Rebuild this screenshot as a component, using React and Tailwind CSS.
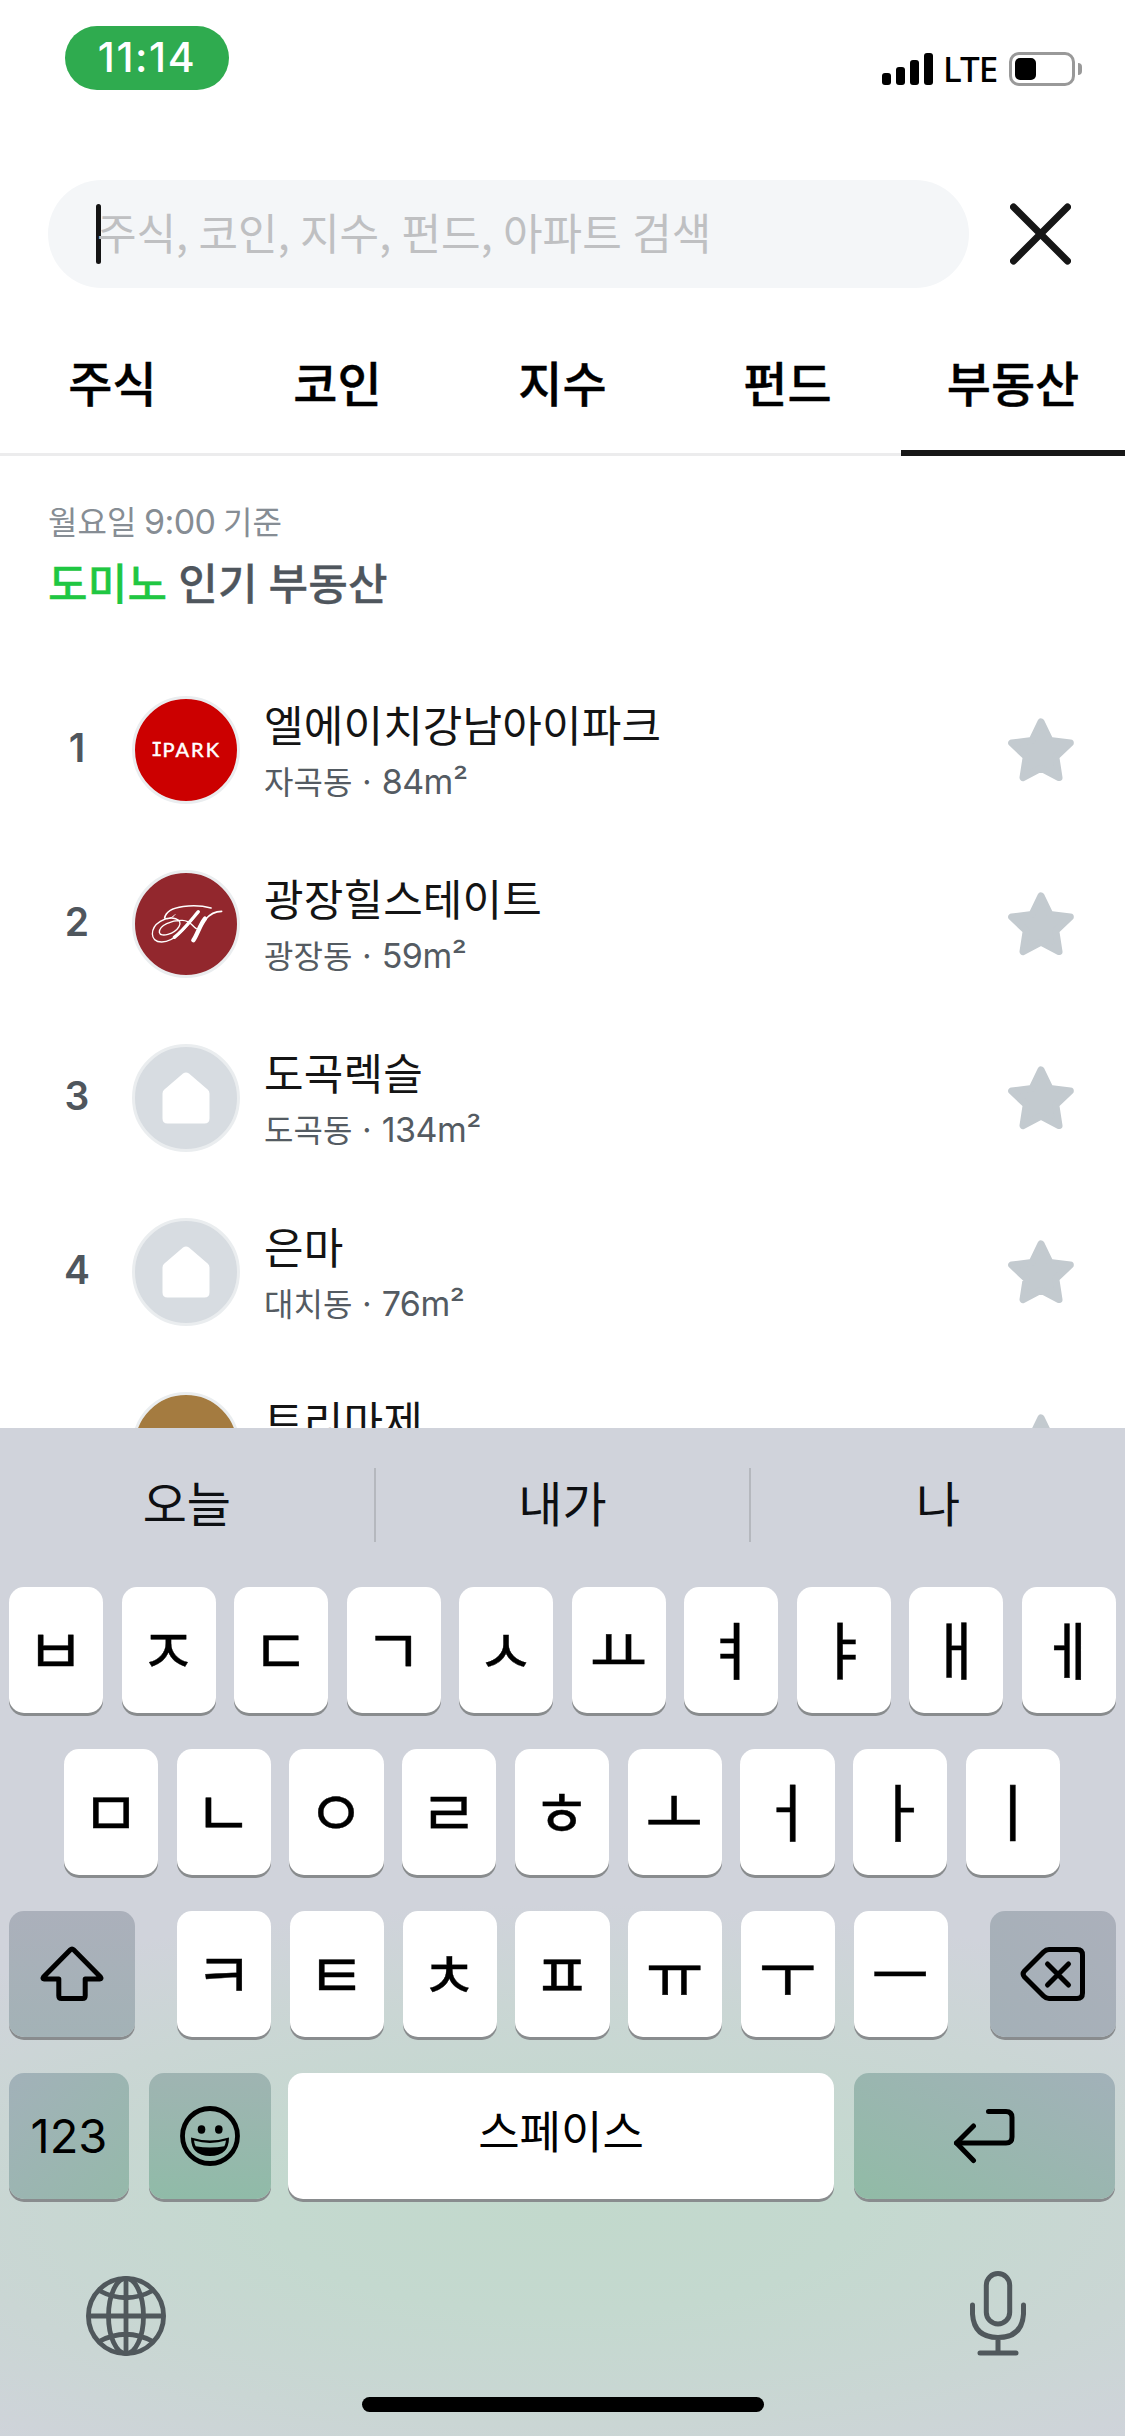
import clsx from "clsx";

const tabs = ["주식", "코인", "지수", "펀드", "부동산"];

const apartments = [
  { rank: 1, name: "엘에이치강남아이파크", area: "자곡동", size: "84m²", logo: "ipark" },
  { rank: 2, name: "광장힐스테이트", area: "광장동", size: "59m²", logo: "hillstate" },
  { rank: 3, name: "도곡렉슬", area: "도곡동", size: "134m²", logo: "house" },
  { rank: 4, name: "은마", area: "대치동", size: "76m²", logo: "house" },
  { name: "트리마제", logo: "trimage" },
];

const suggestions = ["오늘", "내가", "나"];
const firstRow = ["ㅂ", "ㅈ", "ㄷ", "ㄱ", "ㅅ", "ㅛ", "ㅕ", "ㅑ", "ㅐ", "ㅔ"];
const secondRow = ["ㅁ", "ㄴ", "ㅇ", "ㄹ", "ㅎ", "ㅗ", "ㅓ", "ㅏ", "ㅣ"];
const thirdRow = ["ㅋ", "ㅌ", "ㅊ", "ㅍ", "ㅠ", "ㅜ", "ㅡ"];

function StatusBar() {
  return (
    <header className="flex h-[180px] items-start justify-between pt-[26px] pr-[43px] pl-[65px]">
      <div className="flex h-16 w-[164px] items-center justify-center rounded-full bg-[#2fab4f] font-['Inter'] text-[41px] font-medium tracking-[1.6px] text-white">
        11:14
      </div>
      <div className="flex items-end pt-[26px]">
        <div className="mb-px flex items-end gap-[5px]">
          <span className="h-3 w-[9px] rounded-[3px] bg-black" />
          <span className="h-[18px] w-[9px] rounded-[3px] bg-black" />
          <span className="h-[25px] w-[9px] rounded-[3px] bg-black" />
          <span className="h-8 w-[9px] rounded-[3px] bg-black" />
        </div>
        <span className="ml-[10px] w-[66px] font-['Noto_Sans'] text-[35px] leading-[34px] font-medium tracking-[-1px] text-black">
          LTE
        </span>
        <div className="flex h-[34px] w-[66px] items-center rounded-[10px] border-3 border-[#999] pl-[3px]">
          <span className="h-[22px] w-[21px] rounded-[5px] bg-black" />
        </div>
        <span className="mb-[11px] ml-[3px] h-3 w-1 rounded-r-full bg-[#999]" />
      </div>
    </header>
  );
}

function SearchBar() {
  return (
    <div className="flex h-[108px] items-center pl-12">
      <div className="flex h-full w-[921px] shrink-0 items-center rounded-full bg-[#f4f6f8] pl-12">
        <span className="h-[60px] w-[5px] rounded-full bg-[#141414]" />
        <span className="-ml-[4px] pb-[6px] text-[43px] leading-[60px] whitespace-nowrap text-[#bfc0c2] [word-spacing:0.8px]">
          주식, 코인, 지수, 펀드, 아파트 검색
        </span>
      </div>
      <button type="button" className="ml-[41px]">
        <svg width="61" height="62" viewBox="0 0 61 62" fill="none" stroke="#161616" strokeWidth="7" strokeLinecap="round">
          <path d="M3.5 4 57.5 58M57.5 4 3.5 58" />
        </svg>
      </button>
    </div>
  );
}

function Tabs() {
  return (
    <nav className="grid h-[168px] grid-cols-5 shadow-[inset_0_-3px_0_#ececed]">
      {tabs.map((tab, i) => (
        <button
          key={tab}
          type="button"
          className={clsx(
            "pt-[18px] text-[48px] font-medium text-black [-webkit-text-stroke:0.4px_#000]",
            i === 4 && "ml-px shadow-[inset_0_-6px_0_#171717]"
          )}
        >
          {tab}
        </button>
      ))}
    </nav>
  );
}

function Logo({ type }) {
  return (
    <div
      className={clsx(
        "flex size-[108px] shrink-0 items-center justify-center rounded-full border-3 border-[#eaedef]",
        type === "ipark" && "bg-[#cc0000]",
        type === "hillstate" && "bg-[#92272d]",
        type === "house" && "bg-[#d7dce1]",
        type === "trimage" && "bg-[#a47b40]"
      )}
    >
      {type === "ipark" && (
        <span className="flex items-center pb-0.5 text-[20px] leading-5 tracking-[2px] text-white [-webkit-text-stroke:0.5px_#fff]">
          <span className="font-['DejaVu_Sans_Mono'] text-[19px] tracking-[0px]">I</span>
          <span className="font-['Lato']">PARK</span>
        </span>
      )}
      {type === "hillstate" && (
        <svg width="102" height="102" viewBox="46 39 306 306" fill="none" stroke="#fff" strokeLinecap="round">
          <path d="M274 144C230 132 142 134 135 174" strokeWidth="5" />
          <path d="M135 174C142 181 160 172 166 164" strokeWidth="3" />
          <path d="M236 155C206 196 166 246 126 246C88 246 91 203 122 184C156 164 192 178 178 200C165 222 122 234 119 217C118 196 156 180 188 181C214 182 214 196 230 206" strokeWidth="4" />
          <path d="M236 155C212 183 190 212 164 232" strokeWidth="10" />
          <path d="M306 154C264 154 246 190 221 242" strokeWidth="5" />
          <path d="M256 176C240 196 234 222 221 241" strokeWidth="13" />
        </svg>
      )}
      {type === "house" && (
        <svg width="48" height="52" viewBox="0 0 48 52" fill="#fff">
          <path d="M21 1.6Q24-.8 27 1.6L45.6 17.4Q47.5 19 47.5 21.5V46.5Q47.5 51.5 42.5 51.5H5.5Q.5 51.5 .5 46.5V21.5Q.5 19 2.4 17.4Z" />
        </svg>
      )}
    </div>
  );
}

function Star() {
  return (
    <svg width="66" height="64" viewBox="0 0 66 64" fill="#c3cacf" stroke="#c3cacf" strokeWidth="7" strokeLinejoin="round">
      <path d="M33 3.8 42 22.4 62.3 25 47.8 38.8 51 59.6 33 50.2 15 59.6 18.2 38.8 3.7 25 24 22.4Z" />
    </svg>
  );
}

function ApartmentRow({ apartment }) {
  return (
    <li className="flex h-[174px] shrink-0 items-center pr-[51px] pl-12">
      <span className="w-[58px] pb-[3px] text-center font-['Inter'] text-[39px] font-semibold text-[#4f565d]">
        {apartment.rank}
      </span>
      <div className="ml-[26px]">
        <Logo type={apartment.logo} />
      </div>
      <div className="ml-6 h-[110px] flex-1">
        <p className="-mt-[3px] mb-[2px] text-[43px] leading-[62px] tracking-[0.15px] text-[#141414]">{apartment.name}</p>
        {apartment.area && (
          <p className="text-[32px] leading-[48px] text-[#545b62] [word-spacing:-1.5px]">
            {apartment.area} · <span className="font-['Inter'] text-[34px] tracking-[-0.5px]">{apartment.size}</span>
          </p>
        )}
      </div>
      <Star />
    </li>
  );
}

function Key({ dark, className, children }) {
  return (
    <button
      type="button"
      className={clsx(
        "flex h-[126px] items-center justify-center rounded-[15px] text-black shadow-[0_3px_0_#898c8e]",
        !dark && "bg-white",
        className
      )}
    >
      {children}
    </button>
  );
}

function JamoKey({ label }) {
  return (
    <Key className="pr-px pb-[7px]">
      <span className="text-[63px] leading-none [-webkit-text-stroke:0.4px_#000]">{label}</span>
    </Key>
  );
}

function ShiftIcon() {
  return (
    <svg width="64" height="56" viewBox="0 0 64 56" fill="none" stroke="#000" strokeWidth="5" strokeLinejoin="round">
      <path d="M30.4 3.7Q32 2.1 33.6 3.7L60.5 31Q61.8 33 60 33H45.2V49.8Q45.2 52.5 42.5 52.5H21.5Q18.8 52.5 18.8 49.8V33H4Q2.2 33 3.5 31Z" />
    </svg>
  );
}

function BackspaceIcon() {
  return (
    <svg width="66" height="56" viewBox="0 0 66 56" fill="none" stroke="#000" strokeWidth="5" strokeLinecap="round" strokeLinejoin="round">
      <path d="M29 3.5H57Q62.5 3.5 62.5 9V47Q62.5 52.5 57 52.5H29Q26 52.5 23.5 50L4.5 31Q1.8 28 4.5 25L23.5 6Q26 3.5 29 3.5Z" />
      <path d="M27.5 18 48.5 39M48.5 18 27.5 39" />
    </svg>
  );
}

function EmojiIcon() {
  return (
    <svg width="60" height="60" viewBox="0 0 60 60" fill="none">
      <circle cx="30" cy="30" r="27.5" stroke="#000" strokeWidth="4.8" />
      <ellipse cx="21.5" cy="23.5" rx="3.8" ry="4.2" fill="#000" />
      <ellipse cx="38.8" cy="23.5" rx="3.8" ry="4.2" fill="#000" />
      <path d="M11 31.5Q30 37.5 49 31.5Q49 50 30 50Q11 50 11 31.5Z" fill="#000" />
      <path d="M14 34.6Q30 39.5 46 34.6Q45.6 38 44.3 40.2Q30 42.8 15.7 40.2Q14.4 38 14 34.6Z" fill="#94b9ac" />
    </svg>
  );
}

function ReturnIcon() {
  return (
    <svg width="62" height="56" viewBox="0 0 62 56" fill="none" stroke="#000" strokeWidth="5" strokeLinecap="round" strokeLinejoin="round">
      <path d="M35.5 3.5H53Q59 3.5 59 9.5V29Q59 35 53 35H3.5" />
      <path d="M20.5 18 3.5 35 20.5 52.5" />
    </svg>
  );
}

function GlobeIcon() {
  return (
    <svg width="80" height="80" viewBox="0 0 80 80" fill="none" stroke="#50585c" strokeWidth="4.8">
      <circle cx="40" cy="40" r="37.6" />
      <ellipse cx="40" cy="40" rx="17.5" ry="37.6" />
      <path d="M40 2V78M2 40H78M13 14.5Q40 29 67 14.5M13 65.5Q40 51 67 65.5" />
    </svg>
  );
}

function MicIcon() {
  return (
    <svg width="56" height="85" viewBox="0 0 56 85" fill="none" stroke="#50585c" strokeWidth="5" strokeLinecap="round">
      <rect x="16.3" y="2.5" width="23.4" height="50.5" rx="11.7" />
      <path d="M2.5 34V43Q4 66.5 28 66.5T53.5 43V34M28 67V82M10 82H46" />
    </svg>
  );
}

function Keyboard() {
  return (
    <section className="flex h-[1008px] flex-col bg-[#d0d3db] bg-[radial-gradient(ellipse_900px_310px_at_50%_78%,#c2d9cc_0%,#c4d9cf_32%,#cad6d4_68%,#d0d3db_100%)]">
      <div className="flex h-[159px] items-center pb-[6px]">
        {suggestions.map((word, i) => (
          <div
            key={word}
            className={clsx(
              "flex h-[74px] flex-1 items-center justify-center pb-[7px] text-[48px] text-[#0d0f12]",
              i < 2 && "border-r-2 border-[#b5b8be]"
            )}
          >
            {word}
          </div>
        ))}
      </div>

      <div className="flex flex-col gap-9 px-[9px]">
        <div className="grid grid-cols-10 gap-[18.5px]">
          {firstRow.map((label) => (
            <JamoKey key={label} label={label} />
          ))}
        </div>
        <div className="grid grid-cols-9 gap-[18.5px] pr-14 pl-[55px]">
          {secondRow.map((label) => (
            <JamoKey key={label} label={label} />
          ))}
        </div>
        <div className="flex justify-between">
          <Key dark className="w-[126px] bg-linear-to-b from-[#abb0bb] to-[#a3b2b6]">
            <ShiftIcon />
          </Key>
          <div className="grid w-[771px] grid-cols-7 gap-[18.5px]">
            {thirdRow.map((label) => (
              <JamoKey key={label} label={label} />
            ))}
          </div>
          <Key dark className="w-[126px] bg-linear-to-bl from-[#abb0bb] to-[#a4b0b7]">
            <BackspaceIcon />
          </Key>
        </div>
        <div className="flex">
          <Key dark className="w-[120px] bg-linear-to-br from-[#a2b1b9] to-[#95b9aa] font-['Inter'] text-[47px]">
            123
          </Key>
          <Key dark className="ml-[19.5px] w-[122.5px] bg-linear-to-b from-[#9fb4b2] to-[#90bba8]">
            <EmojiIcon />
          </Key>
          <Key className="ml-[17px] w-[546px] pb-[13px] text-[45px]">스페이스</Key>
          <Key dark className="ml-[19.5px] w-[261.5px] bg-linear-to-tr from-[#91bba6] to-[#a2b1b9]">
            <ReturnIcon />
          </Key>
        </div>
      </div>

      <div className="flex flex-1 justify-between pt-[72px] pr-[99px] pl-[86px]">
        <div className="pt-[5px]">
          <GlobeIcon />
        </div>
        <MicIcon />
      </div>
      <div className="mx-auto mb-6 h-[15px] w-[402px] rounded-full bg-black" />
    </section>
  );
}

export default function App() {
  return (
    <div className="flex h-[2436px] w-[1125px] flex-col overflow-hidden bg-white font-['Noto_Sans_CJK_KR',sans-serif]">
      <StatusBar />
      <SearchBar />
      <Tabs />
      <main className="flex h-[972px] flex-col overflow-hidden">
        <div className="h-[207px] shrink-0 pt-[40px] pl-12">
          <p className="text-[32px] leading-[48px] text-[#868d94] [word-spacing:0.5px]">
            월요일 <span className="font-['Inter'] text-[34px] tracking-[-0.6px]">9:00</span> 기준
          </p>
          <h1 className="text-[43px] leading-[70px] font-medium tracking-[0.2px] text-[#4f565d] [word-spacing:1px] [-webkit-text-stroke:0.3px]">
            <span className="text-[#1fc742]">도미노</span> 인기 부동산
          </h1>
        </div>
        <ul>
          {apartments.map((apartment) => (
            <ApartmentRow key={apartment.name} apartment={apartment} />
          ))}
        </ul>
      </main>
      <Keyboard />
    </div>
  );
}
